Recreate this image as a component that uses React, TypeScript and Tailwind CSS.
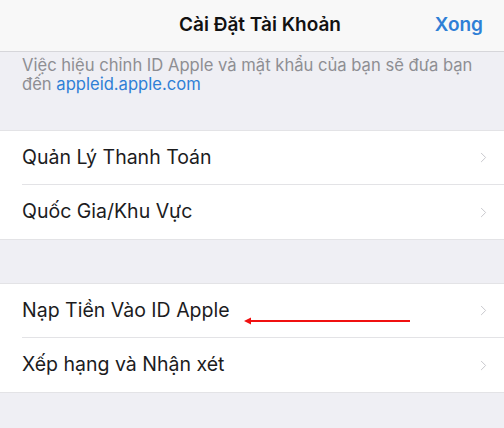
import { ChevronRight } from 'lucide-react';

const groups = [
  ['Quản Lý Thanh Toán', 'Quốc Gia/Khu Vực'],
  ['Nạp Tiền Vào ID Apple', 'Xếp hạng và Nhận xét'],
];

function Row({ label, last, pointer }: { label: string; last: boolean; pointer?: boolean }) {
  return (
    <div className="relative pl-[22px]">
      <div className={`flex h-[54px] items-center justify-between pr-[12px] ${last ? '' : 'border-b border-[#e3e3e6]'}`}>
        <span className="text-[19.5px] text-[#1c1c1e]">{label}</span>
        <ChevronRight size={17} strokeWidth={1.4} className="text-[#c7c7cc]" />
      </div>
      {pointer && (
        <svg className="absolute left-[240px] top-[32px]" width="172" height="10" viewBox="0 0 172 10">
          <line x1="6" y1="5" x2="170" y2="5" stroke="#f01010" strokeWidth="2" />
          <polygon points="4,5 11,1.5 11,8.5" fill="#f01010" />
        </svg>
      )}
    </div>
  );
}

export default function App() {
  return (
    <div className="h-[428px] w-[504px] overflow-hidden bg-[#efeff4]" style={{ fontFamily: 'Inter, "Liberation Sans", Arial, sans-serif' }}>
      <div className="relative flex h-[52px] items-center justify-center border-b border-[#d6d6da] bg-[#f8f8f8] pl-[16px]">
        <span className="text-[19px] font-semibold text-[#111]">Cài Đặt Tài Khoản</span>
        <span className="absolute right-[21px] text-[19px] font-semibold text-[#2f7fd6]">Xong</span>
      </div>
      <div className="px-[22px] pt-[4px] pb-[36px] text-[16.6px] leading-[19px] text-[#8e8e93]">
        Việc hiệu chỉnh ID Apple và mật khẩu của bạn sẽ đưa bạn
        <br />
        đến <span className="text-[#2f7fd6]">appleid.apple.com</span>
      </div>
      {groups.map((g, gi) => (
        <div key={gi} className={`border-y border-[#e3e3e6] bg-white ${gi === 0 ? 'mb-[43px]' : ''}`}>
          {g.map((label, i) => (
            <Row key={label} label={label} last={i === g.length - 1} pointer={label === 'Nạp Tiền Vào ID Apple'} />
          ))}
        </div>
      ))}
    </div>
  );
}
